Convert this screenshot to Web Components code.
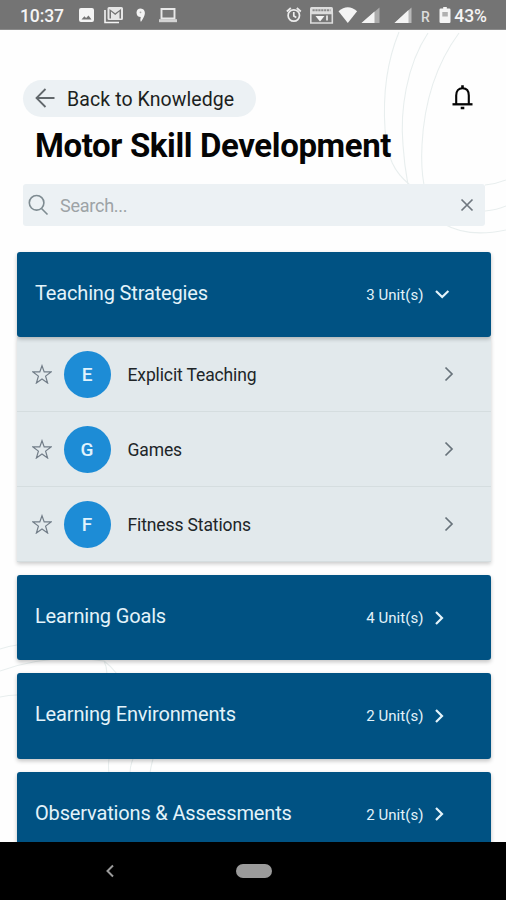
<!DOCTYPE html>
<html lang="en">
<head>
<meta charset="utf-8">
<title>Motor Skill Development</title>
<style>
html, body { margin: 0; height: 100%; overflow: hidden; background: #fff; font-family: Roboto, sans-serif; }
</style>
</head>
<body>
<app-screen></app-screen>
<script>
function define(name, html, setup) {
  const template = document.createElement('template');
  template.innerHTML = html;
  customElements.define(name, class extends HTMLElement {
    constructor() {
      super();
      this.attachShadow({ mode: 'open' }).append(template.content.cloneNode(true));
    }
    connectedCallback() {
      if (setup) setup(this, this.shadowRoot);
    }
  });
}

define('status-bar', `
<style>
:host { display: flex; box-sizing: border-box; height: 30px; padding: 2px 19px 0 20px; align-items: center; background: #747474; border-bottom: 1px solid #8b8b8b; color: #f4f4f4; font: 500 17.5px/28px Roboto, sans-serif; }
svg { display: block; flex: none; margin-top: -1px; }
.time { width: 57px; letter-spacing: -.1px; }
.gap { flex: 1; }
</style>
<span class="time">10:37</span>
<svg width="110" height="20" viewBox="77 5 110 20" fill="#f4f4f4">
  <path fill-rule="evenodd" d="M81 8h11q2 0 2 2v10q0 2-2 2h-11q-2 0-2-2v-10q0-2 2-2zM81.500 19.500h10l-3-4-2.400 2.600-1.700-1.800z"/>
  <path d="M105 10v12.500h14" fill="none" stroke="#f4f4f4" stroke-width="1.600"/>
  <path fill-rule="evenodd" d="M109 7h12.500q1.500 0 1.500 1.500v10q0 1.500-1.500 1.500h-12.500q-1.500 0-1.500-1.500v-10q0-1.500 1.500-1.500zM109.500 9v9.500h1.500v-7l4.200 3.500 4.300-3.500v7h1.500v-9.500l-5.800 4.300z" fill="#e6e6e6"/>
  <path d="M136.500 12.500q.3-4 4.200-4 4 .3 4.200 4.500-.2 3.500-4 9-1-2.300-.2-5-4 0-4.200-4.500z"/><circle cx="140.500" cy="12.300" r=".9" fill="#aaa"/>
  <path d="M161.500 9h13v9.500h-13z" fill="#777" stroke="#e8e8e8" stroke-width="1.900"/><path d="M159 19.200h18v3h-18z" fill="#d4d4d4"/>
</svg>
<span class="gap"></span>
<svg width="170" height="22" viewBox="284 4 170 22" fill="#f4f4f4">
  <g fill="none" stroke="#ececec" stroke-width="1.700"><circle cx="293.800" cy="15.500" r="5.700"/><path d="M293.800 12v4l2.500 1.500M286.800 11.500l4-3.500M300.800 11.500l-4-3.500"/></g>
  <path d="M311.500 7h20q1.500 0 1.500 1.500v5h-23v-5q0-1.500 1.500-1.500z" fill="#dedede"/><path d="M312.500 10.200h18" stroke="#8b8b8b" stroke-width="2" stroke-dasharray="2.200 .7"/>
  <path d="M310.800 13.500h21.500v9.500h-21.500z" fill="#777" stroke="#dcdcdc" stroke-width="1.600"/><path d="M315.500 16h9l-4.500 5.500z"/><path d="M327 15.500v5" stroke="#e4e4e4" stroke-width="1.800"/>
  <path d="M338.500 11.300q9.300-8.300 18.600 0l-9.300 11.700z"/>
  <path d="M361.500 23l18-15.500v15.500z" fill="#ababab"/><path d="M361.500 23l13-11.500v11.500z"/>
  <path d="M394.500 23l17-15.500v15.500z" fill="#b8b8b8"/><path d="M394.500 23l14-13v13z"/>
  <text x="421" y="21.500" font-family="Roboto" font-weight="500" font-size="14" fill="#dcdcdc">R</text>
  <path fill-rule="evenodd" d="M443.200 7h3.600v1.600h2.500q1.200 0 1.200 1.200v12q0 1.200-1.200 1.200h-8.600q-1.200 0-1.200-1.200v-12q0-1.200 1.200-1.200h2.500z"/><path d="M442.300 12h5.500v4.500h-5.500z" fill="#b0b0b0"/>
</svg>
<slot></slot>`);

define('page-swirls', `
<style>
:host { position: absolute; inset: 0; z-index: 0; pointer-events: none; }
svg { display: block; }
</style>
<svg width="506" height="900" fill="none" stroke="#e8eeee" stroke-width="1.100">
  <path d="M399 32C385 66 383 98 385 129C387 158 394 172 410 185"/>
  <path d="M428 33C406 66 400 112 403 145C404 161 406 174 408 185"/>
  <path d="M459 33C434 67 424 105 422 145C421 163 422 174 424 185"/>
  <path d="M485 185Q496 184 506 180M485 211Q497 210 506 206M444 224Q468 238 506 230"/>
  <path d="M0 649Q9 646 17 645M0 671Q50 653 104 661Q111 666 117 674M0 697Q9 695 17 695M104 661Q107 667 107 674M109 759Q108 766 109 773M133 759Q130 766 130 773M153 759Q151 766 150 773"/>
</svg>`);

define('back-pill', `
<style>
:host { display: flex; box-sizing: border-box; width: 233px; height: 37px; padding-left: 11px; align-items: center; gap: 11px; border-radius: 19px; background: #ecf1f4; color: #1c1f21; font: 400 19.500px/37px Roboto, sans-serif; }
span { padding-top: 1px; white-space: nowrap; letter-spacing: .09px; }
svg { margin-top: -2px; }
</style>
<svg width="22" height="22" viewBox="0 0 22 22" fill="none" stroke="#62686c" stroke-width="1.800"><path d="M20.500 11H2.500M11.500 2L2.500 11l9 9"/></svg>
<span><slot></slot></span>`);

define('bell-icon', `
<style>:host { display: block; width: 22px; height: 26px; margin-top: -3px; }</style>
<svg width="22" height="26" viewBox="0 0 22 26" fill="none" stroke="#050505" stroke-width="2.100"><path d="M4.200 20v-8.500C4.200 7 6.500 4.200 10.500 4.200s6.300 2.800 6.300 7.300V20"/><path d="M.5 20.300h20" stroke-width="2.300"/><path d="M10.500 1.200v3M8.700 24h3.600" stroke-width="2.600"/></svg>`);

define('search-field', `
<style>
:host { display: flex; box-sizing: border-box; height: 42px; padding: 0 10px 0 5px; align-items: center; border-radius: 3px; background: #ecf1f4; color: #9da3a6; font: 400 18px/42px Roboto, sans-serif; }
span { flex: 1; padding: 1px 0 0 11px; letter-spacing: -.25px; }
svg { display: block; }
</style>
<svg width="21" height="22" viewBox="0 0 21 22" fill="none" stroke="#7e8b91" stroke-width="1.600"><circle cx="8.600" cy="8.800" r="7.300"/><path d="M13.500 14.500l6 6"/></svg>
<span><slot></slot></span>
<svg width="16" height="16" viewBox="0 0 16 16" fill="none" stroke="#6f777f" stroke-width="1.700"><path d="M2.500 2.500l11 11M13.500 2.500l-11 11"/></svg>`);

define('unit-header', `
<style>
:host { display: flex; position: relative; box-sizing: border-box; height: 85.400px; padding: 0 39px 4px 18.500px; align-items: center; border-radius: 3px; background: #005283; box-shadow: 0 2px 4px rgba(0,0,0,.24); color: #e3f3fa; font: 400 20px/24px Roboto, sans-serif; white-space: nowrap; }
.title { flex: 1; letter-spacing: -.16px; padding-top: 1px; }
.count { font-size: 15px; padding-top: 5px; letter-spacing: .05px; }
svg { display: block; margin-left: 10px; margin-top: 4px; width: 18px; height: 18px; }
</style>
<span class="title"><slot></slot></span><span class="count"></span>
<svg viewBox="0 0 18 18" fill="none" stroke="#e3f3fa" stroke-width="2.200"><path d="M2 3l6 6-6 6"/></svg>`,
(host, root) => {
  root.querySelector('.count').textContent = host.getAttribute('count') + ' Unit(s)';
  if (host.hasAttribute('open')) root.querySelector('path').setAttribute('d', 'M2 6l6.200 6 6.200-6');
});

define('unit-row', `
<style>
:host { display: flex; box-sizing: border-box; height: 75px; padding: 1px 33px 0 15px; align-items: center; background: #e2e9ec; border-bottom: 1px solid #d5dddf; color: #202528; font: 400 17.500px/24px Roboto, sans-serif; }
svg { display: block; }
b { display: flex; width: 47px; height: 47px; margin: 0 17px 0 12px; align-items: center; justify-content: center; border-radius: 50%; background: #1d8cd6; color: #e0f3fc; font-size: 19px; font-weight: 500; }
b i { font-style: normal; padding-top: 2px; }
.name { flex: 1; padding-top: 2px; letter-spacing: -.12px; }
</style>
<svg width="20" height="20" viewBox="0 0 20 20" fill="none" stroke="#727d88" stroke-width="1.200"><path d="M10 1.700l2.200 6.200h6.800l-5.400 4.200 2 6.900-5.600-4-5.600 4 2-6.900-5.400-4.200h6.800z"/></svg>
<b><i></i></b><span class="name"><slot></slot></span>
<svg width="18" height="18" viewBox="0 0 18 18" fill="none" stroke="#68737b" stroke-width="1.700"><path d="M5.500 2.500l6.500 6.500-6.500 6.500"/></svg>`,
(host, root) => { root.querySelector('i').textContent = host.textContent.trim()[0]; });

define('nav-bar', `
<style>
:host { display: grid; position: relative; z-index: 2; height: 58px; grid-template-columns: 105px 131px 36px; align-items: center; background: #000; }
svg { display: block; }
i { display: block; height: 14px; border-radius: 7px; background: #9b9b9b; }
</style>
<span></span><svg width="10" height="14" viewBox="0 0 10 14" fill="none" stroke="#9b9b9b" stroke-width="2"><path d="M8 1.500L2.500 7 8 12.500"/></svg><i></i>`);

define('app-screen', `
<style>
:host { display: flex; position: relative; flex-direction: column; width: 506px; height: 900px; overflow: hidden; background: #fefefe; }
main { position: relative; z-index: 1; flex: 1; min-height: 0; overflow: hidden; }
.top { display: flex; padding: 50px 32px 0 23px; justify-content: space-between; align-items: center; }
h1 { margin: 8px 0 0 35px; color: #050505; font: 700 33px/42px Roboto, sans-serif; letter-spacing: -.38px; white-space: nowrap; }
search-field { margin: 17px 21px 0 23px; }
.list { display: flex; flex-direction: column; gap: 13px; padding: 25.500px 15.500px 0 16.500px; }
.rows { box-shadow: 0 2px 4px rgba(0,0,0,.2); }
</style>
<page-swirls></page-swirls>
<status-bar>43%</status-bar>
<main>
  <div class="top"><back-pill>Back to Knowledge</back-pill><bell-icon></bell-icon></div>
  <h1>Motor Skill Development</h1>
  <search-field>Search...</search-field>
  <div class="list">
    <section>
      <unit-header count="3" open>Teaching Strategies</unit-header>
      <div class="rows">
        <unit-row>Explicit Teaching</unit-row>
        <unit-row>Games</unit-row>
        <unit-row>Fitness Stations</unit-row>
      </div>
    </section>
    <unit-header count="4">Learning Goals</unit-header>
    <unit-header count="2">Learning Environments</unit-header>
    <unit-header count="2">Observations &amp; Assessments</unit-header>
  </div>
</main>
<nav-bar></nav-bar>`);
</script>
</body>
</html>
